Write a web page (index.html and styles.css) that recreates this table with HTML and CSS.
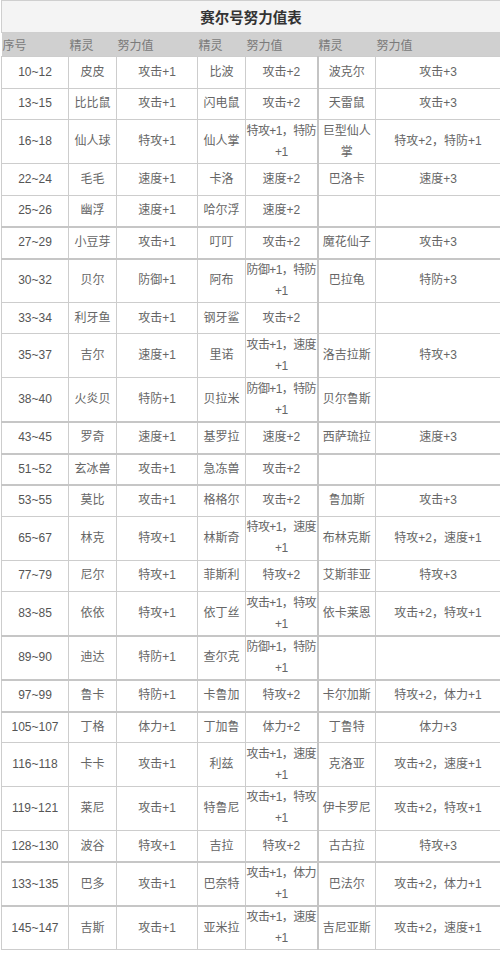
FILE: index.html
```html
<!DOCTYPE html>
<html lang="zh-CN">
<head>
<meta charset="utf-8">
<title>赛尔号努力值表</title>
<link rel="stylesheet" href="styles.css">
</head>
<body>
<table class="ev">
  <colgroup>
    <col class="c-no"><col class="c-n1"><col class="c-v1"><col class="c-n2"><col class="c-v2"><col class="c-n3"><col class="c-v3">
  </colgroup>
  <thead>
    <tr class="title-row"><th colspan="7">赛尔号努力值表</th></tr>
    <tr class="head-row">
      <th>序号</th><th>精灵</th><th>努力值</th><th>精灵</th><th>努力值</th><th>精灵</th><th>努力值</th>
    </tr>
  </thead>
  <tbody>
    <tr class="s"><td class="num">10~12</td><td>皮皮</td><td>攻击+1</td><td>比波</td><td>攻击+2</td><td class="sep">波克尔</td><td class="last">攻击+3</td></tr>
    <tr class="s"><td class="num">13~15</td><td>比比鼠</td><td>攻击+1</td><td>闪电鼠</td><td>攻击+2</td><td class="sep">天雷鼠</td><td class="last">攻击+3</td></tr>
    <tr class="d"><td class="num">16~18</td><td>仙人球</td><td>特攻+1</td><td>仙人掌</td><td class="two">特攻+1，特防<br>+1</td><td class="sep">巨型仙人<br>掌</td><td class="last">特攻+2，特防+1</td></tr>
    <tr class="s"><td class="num">22~24</td><td>毛毛</td><td>速度+1</td><td>卡洛</td><td>速度+2</td><td class="sep">巴洛卡</td><td class="last">速度+3</td></tr>
    <tr class="s"><td class="num">25~26</td><td>幽浮</td><td>速度+1</td><td>哈尔浮</td><td>速度+2</td><td class="sep"></td><td class="last"></td></tr>
    <tr class="s thick"><td class="num">27~29</td><td>小豆芽</td><td>攻击+1</td><td>叮叮</td><td>攻击+2</td><td class="sep">魔花仙子</td><td class="last">攻击+3</td></tr>
    <tr class="d thick"><td class="num">30~32</td><td>贝尔</td><td>防御+1</td><td>阿布</td><td class="two">防御+1，特防<br>+1</td><td class="sep">巴拉龟</td><td class="last">特防+3</td></tr>
    <tr class="s"><td class="num">33~34</td><td>利牙鱼</td><td>攻击+1</td><td>钢牙鲨</td><td>攻击+2</td><td class="sep"></td><td class="last"></td></tr>
    <tr class="d"><td class="num">35~37</td><td>吉尔</td><td>速度+1</td><td>里诺</td><td class="two">攻击+1，速度<br>+1</td><td class="sep">洛吉拉斯</td><td class="last">特攻+3</td></tr>
    <tr class="d"><td class="num">38~40</td><td>火炎贝</td><td>特防+1</td><td>贝拉米</td><td class="two">防御+1，特防<br>+1</td><td class="sep">贝尔鲁斯</td><td class="last"></td></tr>
    <tr class="s thick"><td class="num">43~45</td><td>罗奇</td><td>速度+1</td><td>基罗拉</td><td>速度+2</td><td class="sep">西萨琉拉</td><td class="last">速度+3</td></tr>
    <tr class="s thick"><td class="num">51~52</td><td>玄冰兽</td><td>攻击+1</td><td>急冻兽</td><td>攻击+2</td><td class="sep"></td><td class="last"></td></tr>
    <tr class="s thick"><td class="num">53~55</td><td>莫比</td><td>攻击+1</td><td>格格尔</td><td>攻击+2</td><td class="sep">鲁加斯</td><td class="last">攻击+3</td></tr>
    <tr class="d"><td class="num">65~67</td><td>林克</td><td>特攻+1</td><td>林斯奇</td><td class="two">特攻+1，速度<br>+1</td><td class="sep">布林克斯</td><td class="last">特攻+2，速度+1</td></tr>
    <tr class="s"><td class="num">77~79</td><td>尼尔</td><td>特攻+1</td><td>菲斯利</td><td>特攻+2</td><td class="sep">艾斯菲亚</td><td class="last">特攻+3</td></tr>
    <tr class="d"><td class="num">83~85</td><td>依依</td><td>特攻+1</td><td>依丁丝</td><td class="two">攻击+1，特攻<br>+1</td><td class="sep">依卡莱恩</td><td class="last">攻击+2，特攻+1</td></tr>
    <tr class="d thick"><td class="num">89~90</td><td>迪达</td><td>特防+1</td><td>查尔克</td><td class="two">防御+1，特防<br>+1</td><td class="sep"></td><td class="last"></td></tr>
    <tr class="s thick"><td class="num">97~99</td><td>鲁卡</td><td>特防+1</td><td>卡鲁加</td><td>特攻+2</td><td class="sep">卡尔加斯</td><td class="last">特攻+2，体力+1</td></tr>
    <tr class="s thick"><td class="num">105~107</td><td>丁格</td><td>体力+1</td><td>丁加鲁</td><td>体力+2</td><td class="sep">丁鲁特</td><td class="last">体力+3</td></tr>
    <tr class="d"><td class="num">116~118</td><td>卡卡</td><td>攻击+1</td><td>利兹</td><td class="two">攻击+1，速度<br>+1</td><td class="sep">克洛亚</td><td class="last">攻击+2，速度+1</td></tr>
    <tr class="d"><td class="num">119~121</td><td>莱尼</td><td>攻击+1</td><td>特鲁尼</td><td class="two">攻击+1，特攻<br>+1</td><td class="sep">伊卡罗尼</td><td class="last">攻击+2，特攻+1</td></tr>
    <tr class="s"><td class="num">128~130</td><td>波谷</td><td>特攻+1</td><td>吉拉</td><td>特攻+2</td><td class="sep">古古拉</td><td class="last">特攻+3</td></tr>
    <tr class="d thick"><td class="num">133~135</td><td>巴多</td><td>攻击+1</td><td>巴奈特</td><td class="two">攻击+1，体力<br>+1</td><td class="sep">巴法尔</td><td class="last">攻击+2，体力+1</td></tr>
    <tr class="d thick"><td class="num">145~147</td><td>吉斯</td><td>攻击+1</td><td>亚米拉</td><td class="two">攻击+1，速度<br>+1</td><td class="sep">吉尼亚斯</td><td class="last">攻击+2，速度+1</td></tr>
  </tbody>
</table>
</body>
</html>
```

FILE: styles.css
```css
html, body {
  margin: 0;
  padding: 0;
  background: #ffffff;
}

body {
  font-family: "Liberation Sans", "Noto Sans CJK SC", sans-serif;
  color: #666666;
  font-size: 12px;
}

.ev {
  table-layout: fixed;
  border-collapse: collapse;
  width: 499px;
  margin-left: 1px;
}

.c-no { width: 67px; }
.c-n1 { width: 48px; }
.c-v1 { width: 81px; }
.c-n2 { width: 48px; }
.c-v2 { width: 72px; }
.c-n3 { width: 58px; }
.c-v3 { width: 125px; }

.title-row th {
  height: 31px;
  padding: 0;
  background: #f4f4f4;
  border: 1px solid #cfcfcf;
  color: #333333;
  font-size: 14.5px;
  font-weight: bold;
  text-align: center;
  vertical-align: middle;
}

.head-row th {
  height: 23px;
  padding: 0 0 0 1px;
  background: #d0d0d0;
  color: #7a7a7a;
  font-weight: normal;
  font-size: 12px;
  text-align: left;
  vertical-align: middle;
  border: none;
}

td {
  padding: 0;
  border: 1px solid #cdcdcd;
  text-align: center;
  vertical-align: middle;
  line-height: 21px;
  white-space: nowrap;
}

td.two {
  letter-spacing: -0.6px;
}

td.num {
  color: #555555;
  font-size: 12px;
}

td.sep {
  border-left: 2px solid #c4c4c4;
}

tr.s td { height: 30.6px; }
tr.d td { height: 42.8px; }
tr.s.thick td { height: 29.6px; }
tr.d.thick td { height: 41.8px; }

tr.thick td {
  border-top: 2px solid #c6c6c6;
}
```
